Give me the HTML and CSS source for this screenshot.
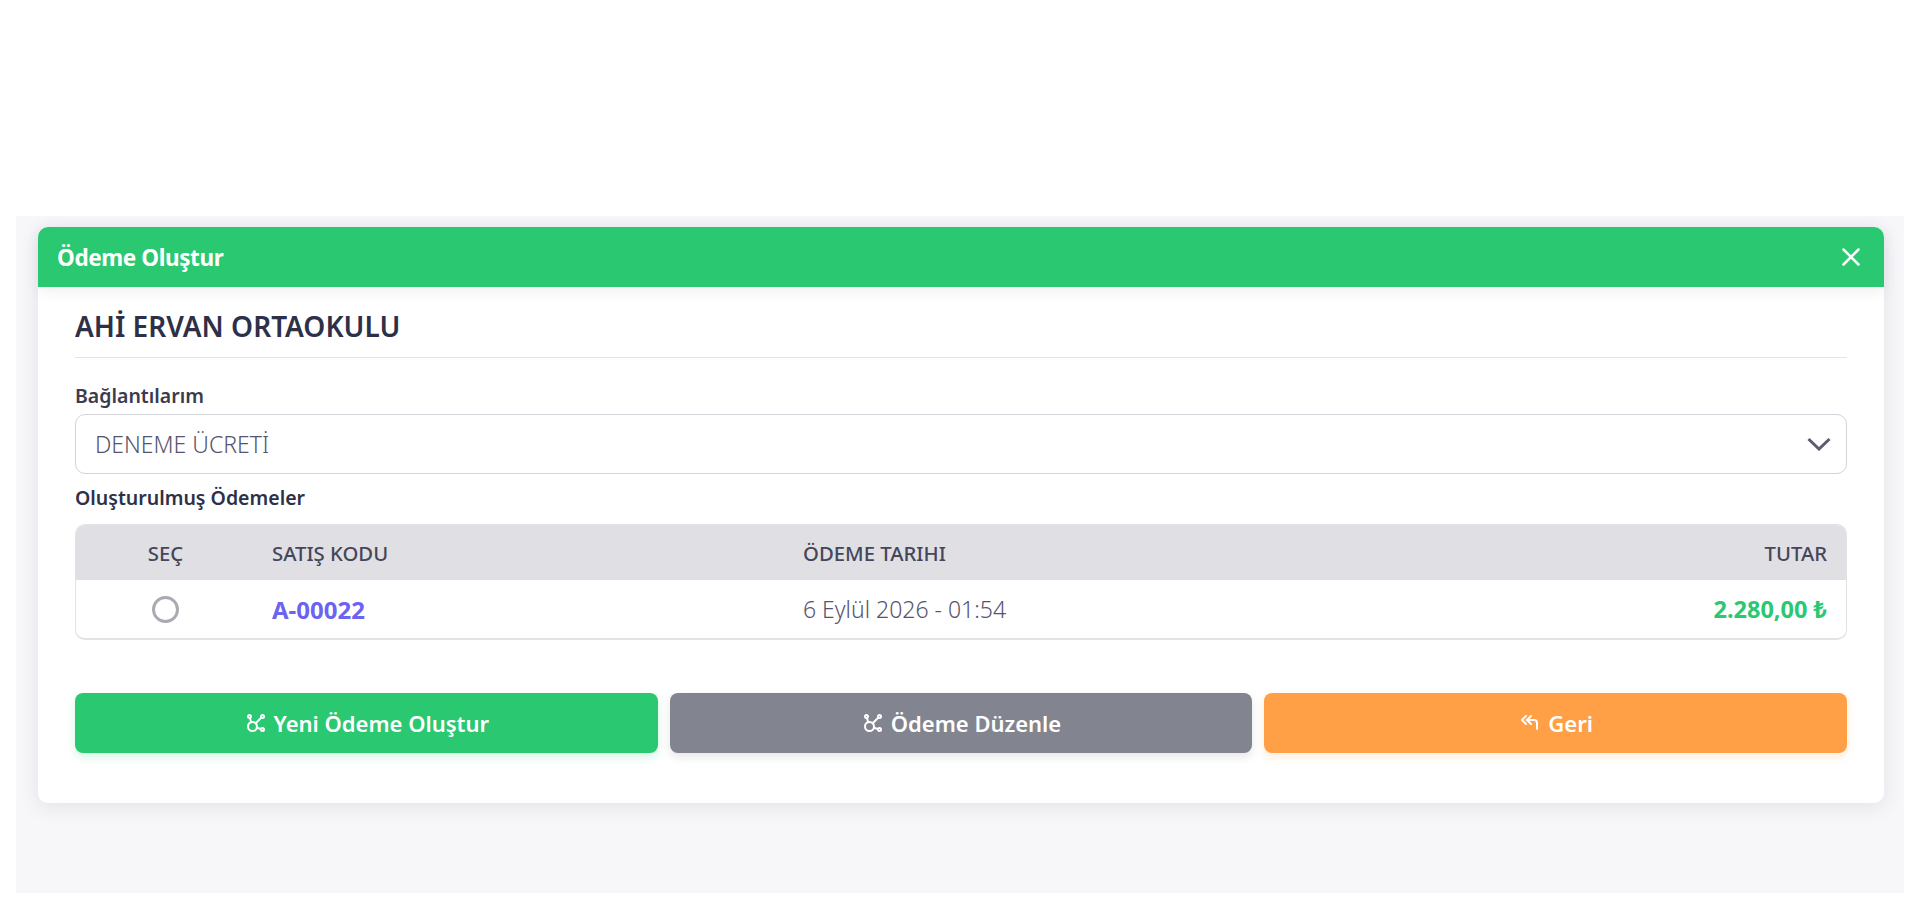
FILE: index.html
```html
<!DOCTYPE html>
<html lang="en">
<head>
    <meta charset="UTF-8">
    <meta name="viewport" content="width=device-width, initial-scale=1.0">
    <title>Ödeme Oluştur</title>
    <link rel="stylesheet" href="styles.css">
</head>
<body>

<div class="page">
    <div class="card">
        <div class="card-header">
            <h3>Ödeme Oluştur</h3>
            <button type="button" class="close-btn" aria-label="Kapat">
                <svg viewBox="0 0 24 24" width="30" height="30"><path d="M18 6l-12 12"/><path d="M6 6l12 12"/></svg>
            </button>
        </div>
        <div class="card-body">
            <h2 class="school-name">AHİ ERVAN ORTAOKULU</h2>
            <div class="form-group">
                <label for="connection">Bağlantılarım</label>
                <select id="connection" name="connection">
                    <option>DENEME ÜCRETİ</option>
                </select>
            </div>
            <div class="section-label">Oluşturulmuş Ödemeler</div>
            <div class="table-wrap">
                <table>
                    <colgroup>
                        <col class="col-select">
                        <col class="col-code">
                        <col>
                        <col class="col-amount">
                    </colgroup>
                    <thead>
                        <tr>
                            <th class="center">SEÇ</th>
                            <th>SATIŞ KODU</th>
                            <th>ÖDEME TARIHI</th>
                            <th class="right">TUTAR</th>
                        </tr>
                    </thead>
                    <tbody>
                        <tr>
                            <td class="center"><input type="radio" name="payment" aria-label="A-00022"></td>
                            <td class="code">A-00022</td>
                            <td class="date">6 Eylül 2026 - 01:54</td>
                            <td class="right amount">2.280,00 ₺</td>
                        </tr>
                    </tbody>
                </table>
            </div>
            <div class="actions">
                <button type="button" class="btn btn-green">
                    <svg viewBox="0 0 24 24" width="24" height="24"><path d="M5.931 6.936l1.275 4.249m5.607 5.609l4.251 1.275"/><path d="M11.683 12.317l5.759 -5.759"/><path d="M5.5 5.5m-1.5 0a1.5 1.5 0 1 0 3 0a1.5 1.5 0 1 0 -3 0"/><path d="M18.5 5.5m-1.5 0a1.5 1.5 0 1 0 3 0a1.5 1.5 0 1 0 -3 0"/><path d="M18.5 18.5m-1.5 0a1.5 1.5 0 1 0 3 0a1.5 1.5 0 1 0 -3 0"/><path d="M8.5 15.5m-4.5 0a4.5 4.5 0 1 0 9 0a4.5 4.5 0 1 0 -9 0"/></svg>
                    Yeni Ödeme Oluştur
                </button>
                <button type="button" class="btn btn-gray">
                    <svg viewBox="0 0 24 24" width="24" height="24"><path d="M5.931 6.936l1.275 4.249m5.607 5.609l4.251 1.275"/><path d="M11.683 12.317l5.759 -5.759"/><path d="M5.5 5.5m-1.5 0a1.5 1.5 0 1 0 3 0a1.5 1.5 0 1 0 -3 0"/><path d="M18.5 5.5m-1.5 0a1.5 1.5 0 1 0 3 0a1.5 1.5 0 1 0 -3 0"/><path d="M18.5 18.5m-1.5 0a1.5 1.5 0 1 0 3 0a1.5 1.5 0 1 0 -3 0"/><path d="M8.5 15.5m-4.5 0a4.5 4.5 0 1 0 9 0a4.5 4.5 0 1 0 -9 0"/></svg>
                    Ödeme Düzenle
                </button>
                <button type="button" class="btn btn-orange">
                    <svg viewBox="0 0 24 24" width="24" height="24"><path d="M19 18v-6a3 3 0 0 0 -3 -3h-7"/><path d="M13 13l-4 -4l4 -4m-5 8l-4 -4l4 -4"/></svg>
                    Geri
                </button>
            </div>
        </div>
    </div>
</div>

</body>
</html>
```
FILE: styles.css
```css
body {
    font-family: "Noto Sans", "Open Sans", sans-serif;
    background-color: #fff;
    margin: 0;
    color: #2e3048;
}
svg {
    fill: none;
    stroke: currentColor;
    stroke-width: 2;
    stroke-linecap: round;
    stroke-linejoin: round;
}
.page {
    background-color: #f7f7fa;
    margin: 216px 10px 0 16px;
    padding: 11px 20px 90px 22px;
}
.card {
    background-color: #fff;
    border-radius: 10px;
    box-shadow: 0 4px 20px rgba(46, 48, 72, 0.1);
}
.card-header {
    display: flex;
    justify-content: space-between;
    align-items: center;
    height: 60px;
    padding: 0 18px 0 19px;
    background-color: #2ac870;
    border-radius: 10px 10px 0 0;
    box-shadow: 0 4px 14px rgba(46, 48, 72, 0.08);
    color: #fff;
}
.card-header h3 {
    margin: 0;
    font-size: 22.5px;
    font-weight: 700;
    letter-spacing: -0.4px;
}
.close-btn {
    display: flex;
    padding: 0;
    border: none;
    background: none;
    color: #fff;
    cursor: pointer;
}
.card-body {
    padding: 20px 37px 50px;
}
.school-name {
    margin: 0 0 26px;
    padding-bottom: 12px;
    border-bottom: 1px solid #e4e4e8;
    font-size: 28px;
    line-height: 38px;
    font-weight: 600;
    color: #2e3048;
}
.form-group label,
.section-label {
    display: block;
    font-size: 19.5px;
    line-height: 24px;
    font-weight: 600;
    color: #3a3b50;
}
.form-group label {
    margin-bottom: 6px;
}
.form-group select {
    display: block;
    width: 100%;
    height: 60px;
    padding: 0 50px 0 19px;
    border: 1px solid #d3d3da;
    border-radius: 10px;
    appearance: none;
    background-color: #fff;
    background-image: url("data:image/svg+xml,%3Csvg xmlns='http://www.w3.org/2000/svg' viewBox='0 0 24 14'%3E%3Cpath d='M1.5 2l10.5 10 10.5-10' fill='none' stroke='%235d5c70' stroke-width='3'/%3E%3C/svg%3E");
    background-repeat: no-repeat;
    background-position: right 15px center;
    background-size: 24px 14px;
    font-family: inherit;
    font-size: 23px;
    font-weight: 300;
    color: #55546c;
}
.section-label {
    margin-top: 12px;
    margin-bottom: 14px;
    color: #2e3048;
}
.table-wrap {
    border: 1px solid #e2e2e7;
    border-bottom-width: 2px;
    border-radius: 10px;
    overflow: hidden;
}
table {
    width: 100%;
    border-collapse: collapse;
    table-layout: fixed;
}
.col-select {
    width: 179px;
}
.col-code {
    width: 531px;
}
.col-amount {
    width: 300px;
}
th,
td {
    padding: 0 17px;
    text-align: left;
}
th {
    height: 55px;
    background-color: #dfdfe4;
    font-size: 20.3px;
    font-weight: 500;
    color: #45465a;
}
td {
    height: 58px;
    font-size: 23px;
}
.center {
    text-align: center;
}
th.right,
td.right {
    padding-right: 19px;
    text-align: right;
}
.code {
    font-weight: 700;
    font-size: 24px;
    color: #6c63f0;
}
.date {
    font-weight: 300;
    color: #55546c;
}
td.amount {
    font-weight: 700;
    font-size: 23.5px;
    color: #2ac870;
}
input[type="radio"] {
    appearance: none;
    display: block;
    width: 27px;
    height: 27px;
    margin: 0 auto;
    border: 3px solid #aaaab2;
    border-radius: 50%;
    background-color: #fff;
}
.actions {
    display: grid;
    grid-template-columns: repeat(3, 1fr);
    gap: 12px;
    margin-top: 53px;
}
.btn {
    display: flex;
    justify-content: center;
    align-items: center;
    gap: 6px;
    height: 60px;
    border: none;
    border-radius: 8px;
    font-family: inherit;
    font-size: 22px;
    font-weight: 600;
    color: #fff;
    cursor: pointer;
}
.btn-green {
    background-color: #2ac870;
    box-shadow: 0 4px 10px rgba(42, 200, 112, 0.2);
}
.btn-gray {
    background-color: #82858f;
    box-shadow: 0 4px 10px rgba(130, 133, 143, 0.2);
}
.btn-orange {
    background-color: #ffa046;
    box-shadow: 0 4px 10px rgba(255, 160, 70, 0.2);
}
```
